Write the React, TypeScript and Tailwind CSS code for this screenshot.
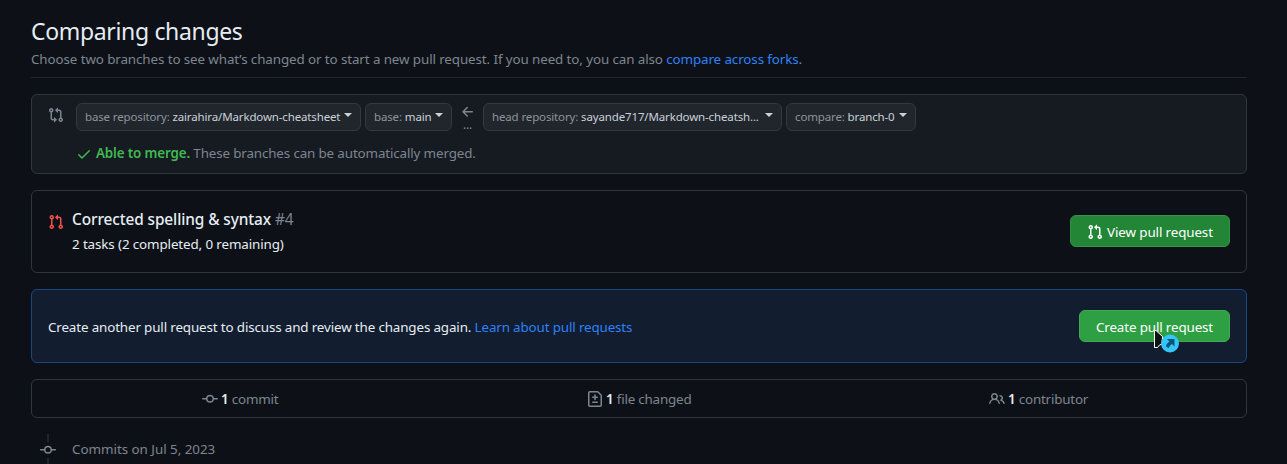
const ICONS = {
  compare:
    "M9.573.677A.25.25 0 0 1 10 .854V2.5h1A2.5 2.5 0 0 1 13.5 5v5.628a2.251 2.251 0 1 1-1.5 0V5a1 1 0 0 0-1-1h-1v1.646a.25.25 0 0 1-.427.177L7.177 3.427a.25.25 0 0 1 0-.354ZM6 12v-1.646a.25.25 0 0 1 .427-.177l2.396 2.396a.25.25 0 0 1 0 .354l-2.396 2.396A.25.25 0 0 1 6 15.146V13.5H5A2.5 2.5 0 0 1 2.5 11V5.372a2.25 2.25 0 1 1 1.5 0V11a1 1 0 0 0 1 1ZM4 3.25a.75.75 0 1 0-1.5 0 .75.75 0 0 0 1.5 0ZM12.75 12a.75.75 0 1 0 0 1.5.75.75 0 0 0 0-1.5Z",
  pullRequest:
    "M1.5 3.25a2.25 2.25 0 1 1 3 2.122v5.256a2.251 2.251 0 1 1-1.5 0V5.372A2.25 2.25 0 0 1 1.5 3.25Zm5.677-.177L9.573.677A.25.25 0 0 1 10 .854V2.5h1A2.5 2.5 0 0 1 13.5 5v5.628a2.251 2.251 0 1 1-1.5 0V5a1 1 0 0 0-1-1h-1v1.646a.25.25 0 0 1-.427.177L7.177 3.427a.25.25 0 0 1 0-.354ZM3.75 2.5a.75.75 0 1 0 0 1.5.75.75 0 0 0 0-1.5Zm0 9.5a.75.75 0 1 0 0 1.5.75.75 0 0 0 0-1.5Zm8.25.75a.75.75 0 1 0 1.5 0 .75.75 0 0 0-1.5 0Z",
  check:
    "M13.78 4.22a.75.75 0 0 1 0 1.06l-7.25 7.25a.75.75 0 0 1-1.06 0L2.22 9.28a.751.751 0 0 1 .018-1.042.751.751 0 0 1 1.042-.018L6 10.94l6.72-6.72a.75.75 0 0 1 1.06 0Z",
  arrowLeft:
    "M7.78 12.53a.75.75 0 0 1-1.06 0L2.47 8.28a.75.75 0 0 1 0-1.06l4.25-4.25a.751.751 0 0 1 1.042.018.751.751 0 0 1 .018 1.042L4.81 7h7.44a.75.75 0 0 1 0 1.5H4.81l2.97 2.97a.75.75 0 0 1 0 1.06Z",
  commit:
    "M11.93 8.5a4.002 4.002 0 0 1-7.86 0H.75a.75.75 0 0 1 0-1.5h3.32a4.002 4.002 0 0 1 7.86 0h3.32a.75.75 0 0 1 0 1.5Zm-1.43-.75a2.5 2.5 0 1 0-5 0 2.5 2.5 0 0 0 5 0Z",
  fileDiff:
    "M1 1.75C1 .784 1.784 0 2.75 0h7.586c.464 0 .909.184 1.237.513l2.914 2.914c.329.328.513.773.513 1.237v9.586A1.75 1.75 0 0 1 13.25 16H2.75A1.75 1.75 0 0 1 1 14.25Zm1.75-.25a.25.25 0 0 0-.25.25v12.5c0 .138.112.25.25.25h10.5a.25.25 0 0 0 .25-.25V4.664a.25.25 0 0 0-.073-.177l-2.914-2.914a.25.25 0 0 0-.177-.073ZM8 3.25a.75.75 0 0 1 .75.75v1.5h1.5a.75.75 0 0 1 0 1.5h-1.5v1.5a.75.75 0 0 1-1.5 0V7h-1.5a.75.75 0 0 1 0-1.5h1.5V4A.75.75 0 0 1 8 3.25Zm-3 8a.75.75 0 0 1 .75-.75h4.5a.75.75 0 0 1 0 1.5h-4.5a.75.75 0 0 1-.75-.75Z",
  people:
    "M2 5.5a3.5 3.5 0 1 1 5.898 2.549 5.508 5.508 0 0 1 3.034 4.084.75.75 0 1 1-1.482.235 4 4 0 0 0-7.9 0 .75.75 0 0 1-1.482-.236A5.507 5.507 0 0 1 3.102 8.05 3.493 3.493 0 0 1 2 5.5ZM11 4a3.001 3.001 0 0 1 2.22 5.018 5.01 5.01 0 0 1 2.56 3.012.749.749 0 0 1-.885.954.752.752 0 0 1-.549-.514 3.507 3.507 0 0 0-2.522-2.372.75.75 0 0 1-.574-.73v-.352a.75.75 0 0 1 .416-.672A1.5 1.5 0 0 0 11 5.5.75.75 0 0 1 11 4Zm-5.5-.5a2 2 0 1 0-.001 3.999A2 2 0 0 0 5.5 3.5Z",
};

function Icon({ name, className = "" }: { name: keyof typeof ICONS; className?: string }) {
  return (
    <svg viewBox="0 0 16 16" fill="currentColor" className={`size-4 shrink-0 ${className}`}>
      <path d={ICONS[name]} />
    </svg>
  );
}

function Picker({ label, value, className }: { label: string; value: string; className: string }) {
  return (
    <button
      className={`flex h-7 shrink-0 items-center rounded-md border border-[#343941] bg-[#21262d] pl-2 text-[11.5px] leading-5 tracking-[-0.14px] whitespace-nowrap ${className}`}
    >
      <span className="text-[#8b949e]">{label}:&nbsp;</span>
      <span className="text-[#c9d1d9]">{value}</span>
      <span className="mr-2 mb-1 ml-auto border-x-4 border-t-4 border-x-transparent border-t-[#c9d1d9]" />
    </button>
  );
}

function Stat({ icon, label, className }: { icon: keyof typeof ICONS; label: string; className: string }) {
  return (
    <div className={`flex items-center text-[#7d8590] ${className}`}>
      <Icon name={icon} className="mt-px" />
      <span className="mt-px ml-[3px] tracking-[-0.2px]">
        <span className="font-semibold text-[#e6edf3]">1</span> {label}
      </span>
    </div>
  );
}

function Cursor() {
  return (
    <svg className="absolute top-[18px] left-[73px]" width="28" height="26" viewBox="0 0 28 26">
      <path d="M1.5 1.5 L3 1.5 L9.5 7.5 L9 15 L6.5 16 L4.5 18.5 H1.5 Z" fill="#111" stroke="#fff" strokeWidth="1" />
      <circle cx="17" cy="14.5" r="9" fill="#35c5fa" />
      <path d="M14 10 H21.5 V17.5 L19 15 Q16.5 16.4 15.7 19.3 L12.8 17.3 Q13.5 14.4 16.4 12.4 Z" fill="#07567a" />
    </svg>
  );
}

export default function App() {
  return (
    <main className="h-[464px] overflow-hidden bg-[#0d1117] pt-[13px] pr-10 pl-[31px] font-['Noto_Sans','Open_Sans',sans-serif] text-[13.4px] leading-[21px] tracking-[-0.14px] text-[#e6edf3]">
      <header className="h-[65px] border-b border-[#21262d]">
        <h1 className="text-[23px] leading-9 tracking-[-0.34px]">Comparing changes</h1>
        <p className="tracking-[-0.105px] text-[#7d8590]">
          Choose two branches to see what’s changed or to start a new pull request. If you need to, you can also{" "}
          <a className="text-[#2f81f7]">compare across forks</a>.
        </p>
      </header>

      <section className="mt-4 h-20 rounded-md border border-[#30363d] bg-[#161b22] pt-2 pl-4">
        <div className="flex items-start">
          <Icon name="compare" className="mt-1 mr-3 text-[#7d8590]" />
          <Picker label="base repository" value="zairahira/Markdown-cheatsheet" className="w-[285px]" />
          <Picker label="base" value="main" className="ml-1 w-[87px]" />
          <div className="flex w-[31px] flex-col items-center text-[#7d8590]">
            <Icon name="arrowLeft" className="mt-px" />
            <span className="h-3 text-[12px] leading-[10px]">...</span>
          </div>
          <Picker label="head repository" value="sayande717/Markdown-cheatsh..." className="w-[299px]" />
          <Picker label="compare" value="branch-0" className="ml-1 w-[130px]" />
        </div>
        <p className="mt-[11px] flex items-center pl-7 text-[#7d8590]">
          <Icon name="check" className="mt-px mr-1 text-[#3fb950]" />
          <span className="font-semibold text-[#3fb950]">Able to merge.</span>&nbsp;These branches can be automatically
          merged.
        </p>
      </section>

      <section className="mt-4 flex h-[83px] rounded-md border border-[#30363d] px-4">
        <Icon name="pullRequest" className="mt-[23px] text-[#f85149]" />
        <div className="mt-[17px] ml-2">
          <h2 className="text-[15.4px] leading-6 font-medium tracking-[-0.1px]">
            Corrected spelling &amp; syntax <span className="font-normal text-[#7d8590]">#4</span>
          </h2>
          <p className="mt-[2px] tracking-[-0.12px]">2 tasks (2 completed, 0 remaining)</p>
        </div>
        <button className="mt-6 ml-auto flex h-8 w-40 items-center justify-center rounded-md border border-[#38914a] bg-[#238636] text-white">
          <Icon name="pullRequest" className="mt-[2px] mr-1" />
          <span className="mt-[2px] tracking-[-0.12px]">View pull request</span>
        </button>
      </section>

      <section className="mt-4 flex h-[74px] items-center justify-between rounded-md border border-[#1c4584] bg-[#121d2f] px-4">
        <p className="pt-[2px]">
          Create another pull request to discuss and review the changes again.{" "}
          <a className="text-[#2f81f7]">Learn about pull requests</a>
        </p>
        <button className="relative h-8 w-[151px] rounded-md border border-[#43a854] bg-[#2ea043] pt-[2px] text-white">
          Create pull request
          <Cursor />
        </button>
      </section>

      <section className="mt-4 flex h-[39px] items-center rounded-md border border-[#30363d]">
        <Stat icon="commit" label="commit" className="ml-[170px] w-[385px]" />
        <Stat icon="fileDiff" label="file changed" className="w-[402px]" />
        <Stat icon="people" label="contributor" className="" />
      </section>

      <section className="mt-4 flex text-[#7d8590]">
        <div className="ml-[9px] flex w-4 flex-col items-center">
          <span className="h-2 w-0.5 bg-[#21262d]" />
          <Icon name="commit" />
          <span className="h-2 w-0.5 bg-[#21262d]" />
        </div>
        <p className="mt-[5px] ml-4 tracking-[-0.03px]">Commits on Jul 5, 2023</p>
      </section>
    </main>
  );
}
